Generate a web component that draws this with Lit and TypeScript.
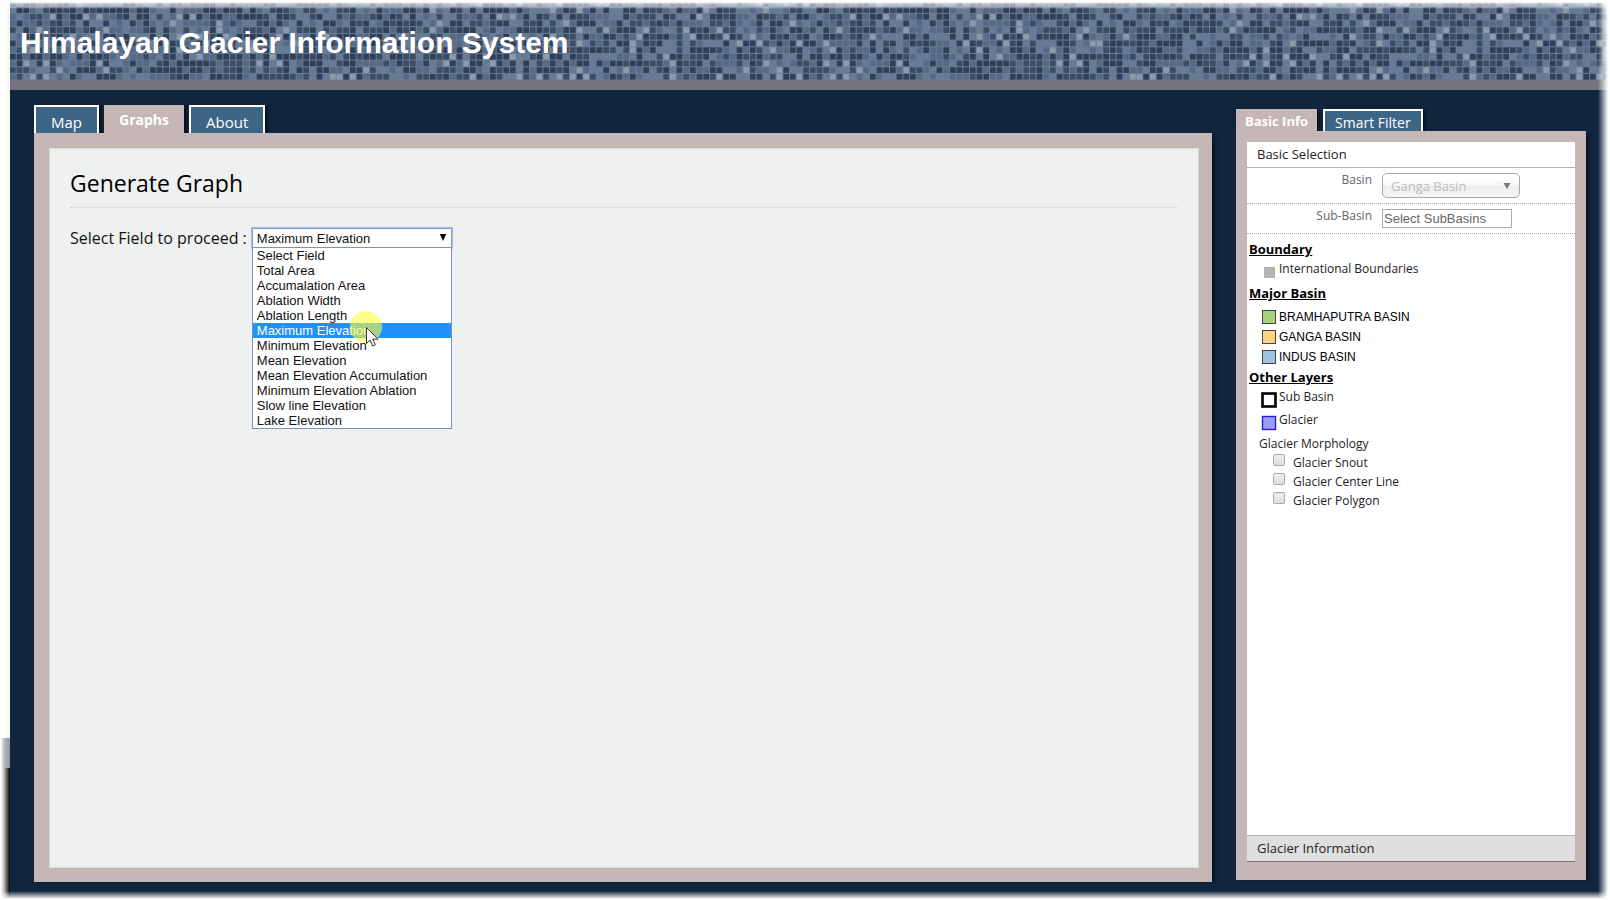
import { LitElement, html, css, svg } from "lit";
import { customElement, state } from "lit/decorators.js";

const FIELDS = [
  "Select Field",
  "Total Area",
  "Accumalation Area",
  "Ablation Width",
  "Ablation Length",
  "Maximum Elevation",
  "Minimum Elevation",
  "Mean Elevation",
  "Mean Elevation Accumulation",
  "Minimum Elevation Ablation",
  "Slow line Elevation",
  "Lake Elevation",
];

const TILE_COLS = 120;
const TILE_ROWS = 12;
const PITCH = 20 / 3;
const SHADES: [number, string][] = [
  [0.3, "#2f3f59"],
  [0.5, "#3b4c67"],
  [0.72, "#566a86"],
  [0.93, "#677b96"],
  [1, "#8c9bab"],
];

/* Deterministic mosaic so the banner looks the same on every load. */
function mosaicCells() {
  let seed = 20417;
  const next = () => {
    seed = (seed * 16807) % 2147483647;
    return seed / 2147483647;
  };
  const cells = [];
  for (let r = 0; r < TILE_ROWS; r++) {
    for (let c = 0; c < TILE_COLS; c++) {
      const v = next();
      const fill = SHADES.find(([limit]) => v <= limit)![1];
      cells.push(svg`<rect x=${c * PITCH} y=${r * PITCH + 0.6} width=${PITCH - 1} height=${PITCH - 1} fill=${fill}></rect>`);
    }
  }
  return cells;
}

@customElement("mosaic-banner")
class MosaicBanner extends LitElement {
  static styles = css`
    :host { display: block; position: relative; height: 80px; border-bottom: 10px solid #757380; overflow: hidden; }
    .tiles { position: absolute; inset: 0; width: 100%; height: 100%; }
    .title { position: relative; margin: 0; padding-left: 10px; font: bold 30px/86px "Liberation Sans", Arial, sans-serif; color: #fff; white-space: nowrap; }
  `;
  render() {
    return html`
      <svg class="tiles" aria-hidden="true">
        <defs>
          <pattern id="mosaic" width=${TILE_COLS * PITCH} height=${TILE_ROWS * PITCH} patternUnits="userSpaceOnUse">
            <rect width="800" height="80" fill="#687b93"></rect>
            ${mosaicCells()}
          </pattern>
        </defs>
        <rect width="100%" height="100%" fill="url(#mosaic)"></rect>
      </svg>
      <h1 class="title">Himalayan Glacier Information System</h1>
    `;
  }
}

@customElement("graph-form")
class GraphForm extends LitElement {
  @state() private chosen = "Maximum Elevation";
  static styles = css`
    :host { display: block; padding: 18px 20px; font-family: "Open Sans", sans-serif; color: #111; }
    .heading { margin: 0; padding-bottom: 8px; border-bottom: 1px dotted #ccc; font-size: 23px; line-height: 32px; font-weight: 400; color: #000; }
    .row { display: flex; align-items: center; gap: 5px; margin-top: 20px; font-size: 16px; line-height: 20px; }
    .picker { position: relative; width: 200px; font: 13px/15px "Liberation Sans", Arial, sans-serif; }
    .select { appearance: none; display: block; box-sizing: border-box; width: 100%; height: 20px; margin: 0; padding: 0 4px; border: 1px solid #7f9fce; border-radius: 0; outline: 1px solid #a5c0ea; outline-offset: 0; background: #fff; font: inherit; color: #111; }
    .arrow { position: absolute; right: 5px; top: 6px; width: 8px; height: 7px; pointer-events: none; }
    .options { position: absolute; z-index: 1; top: 19px; left: 0; right: 0; margin: 0; padding: 0; list-style: none; border: 1px solid #7f93b8; background: #fff; }
    .option { padding-left: 4px; color: #111; }
    .option.active { background: #1e90ff; color: #fff; }
    .pointer { position: absolute; z-index: 2; left: 98px; top: 83px; width: 32px; height: 36px; pointer-events: none; }
  `;
  render() {
    return html`
      <h2 class="heading">Generate Graph</h2>
      <div class="row">
        <label for="field">Select Field to proceed :</label>
        <div class="picker">
          <select id="field" class="select" .value=${this.chosen}
            @change=${(e: Event) => (this.chosen = (e.target as HTMLSelectElement).value)}>
            ${FIELDS.map((f) => html`<option ?selected=${f === this.chosen}>${f}</option>`)}
          </select>
          <svg class="arrow" viewBox="0 0 8 7"><path d="M0.8 0h6.4L4 7z" fill="#000"></path></svg>
          <ul class="options" role="listbox" aria-label="Field">
            ${FIELDS.map((f) => html`
              <li class="option ${f === this.chosen ? "active" : ""}" role="option" aria-selected=${f === this.chosen}
                @click=${() => (this.chosen = f)}>${f}</li>`)}
          </ul>
          <svg class="pointer" viewBox="0 0 32 36" aria-hidden="true">
            <circle cx="16" cy="16" r="16" fill="#ffff3c" fill-opacity="0.6"></circle>
            <path d="M16.5 16.5v16l3.6-3.4 2.5 5.9 2.7-1.2-2.5-5.6h5.2z" fill="#fff" stroke="#333" stroke-width="1"></path>
          </svg>
        </div>
      </div>
    `;
  }
}

@customElement("basic-info")
class BasicInfo extends LitElement {
  static styles = css`
    :host { display: flex; flex-direction: column; flex: 1; background: #fff; font-family: "Open Sans", sans-serif; font-size: 12px; color: #222; }
    .bar { margin: 0; padding-left: 10px; font-size: 13px; line-height: 25px; font-weight: 400; border-bottom: 1px solid #b3b3b3; }
    .bar.closed { margin-top: auto; background: #dfdfdf; border-top: 1px solid #b3b3b3; border-bottom-color: #777; }
    .field { display: grid; grid-template-columns: 125px 1fr; column-gap: 10px; border-bottom: 1px dotted #aaa; color: #666; padding: 5px 0; align-items: start; }
    .caption { text-align: right; line-height: 14px; }
    .basin { position: relative; width: 138px; }
    .basin-select { appearance: none; display: block; box-sizing: border-box; width: 100%; height: 25px; margin: 0; padding: 0 8px; border: 1px solid #aaa; border-radius: 5px; background: linear-gradient(#fff 20%, #f6f6f6 50%, #eee 52%, #f4f4f4); font: inherit; font-size: 13px; color: #bbb; opacity: 1; }
    .arrow { position: absolute; right: 9px; top: 10px; width: 8px; height: 6px; pointer-events: none; }
    .sub { display: block; box-sizing: border-box; width: 130px; height: 19px; margin: 0; padding: 0 1px; border: 1px solid #aaa; font: 13px "Liberation Sans", Arial, sans-serif; color: #666; }
    .sub::placeholder { color: #666; }
    .legend { padding: 6px 2px; }
    .group { margin: 0; font-size: 13px; line-height: 18px; font-weight: 700; text-decoration: underline; color: #000; }
    .item { display: grid; grid-template-columns: 16px 1fr; column-gap: 2px; padding-left: 12px; height: 23px; line-height: 22px; }
    .item svg { width: 16px; height: 16px; margin-top: 6px; overflow: visible; }
    .boundary { height: 26px; }
    .basins { padding: 5px 0 1px; }
    .basins .item { height: 20px; line-height: 20px; font-family: "Liberation Sans", Arial, sans-serif; color: #000; }
    .basins svg { margin-top: 2px; }
    .sublist { margin: 0; padding: 3px 0 0 10px; line-height: 18px; }
    .check { display: flex; gap: 8px; align-items: flex-start; height: 19px; padding-left: 24px; line-height: 19px; }
    .box { appearance: none; box-sizing: border-box; width: 12px; height: 12px; margin: 1px 0 0; border: 1px solid #aaa; border-radius: 2px; background: linear-gradient(#eee, #ddd); }
    .box:checked { background: #3d6585; }
  `;
  private swatch(fill: string, stroke: string, width = 1) {
    return html`<svg viewBox="0 0 16 16" aria-hidden="true"><rect x="1.5" y="1.5" width="13" height="13" fill=${fill} stroke=${stroke} stroke-width=${width}></rect></svg>`;
  }
  render() {
    return html`
      <h3 class="bar">Basic Selection</h3>
      <div class="field">
        <label class="caption" for="basin">Basin</label>
        <div class="basin">
          <select id="basin" class="basin-select" disabled><option>Ganga Basin</option></select>
          <svg class="arrow" viewBox="0 0 8 6"><path d="M0.5 0h7L4 6z" fill="#777"></path></svg>
        </div>
      </div>
      <div class="field">
        <label class="caption" for="sub">Sub-Basin</label>
        <input id="sub" class="sub" type="text" placeholder="Select SubBasins" />
      </div>
      <div class="legend">
        <h4 class="group">Boundary</h4>
        <div class="item boundary">
          <svg viewBox="0 0 16 16" aria-hidden="true"><rect x="3" y="3" width="11" height="11" fill="#b3b3b3"></rect></svg>
          <span>International Boundaries</span>
        </div>
        <h4 class="group">Major Basin</h4>
        <div class="basins">
          <div class="item">${this.swatch("#a8d37e", "#444")}<span>BRAMHAPUTRA BASIN</span></div>
          <div class="item">${this.swatch("#fed37f", "#444")}<span>GANGA BASIN</span></div>
          <div class="item">${this.swatch("#9dc4e0", "#444")}<span>INDUS BASIN</span></div>
        </div>
        <h4 class="group">Other Layers</h4>
        <div class="item">${this.swatch("#fff", "#000", 2.6)}<span>Sub Basin</span></div>
        <div class="item">${this.swatch("#9c9cfc", "#2020d0", 1.4)}<span>Glacier</span></div>
        <p class="sublist">Glacier Morphology</p>
        ${["Glacier Snout", "Glacier Center Line", "Glacier Polygon"].map(
          (t) => html`<label class="check"><input class="box" type="checkbox" /><span>${t}</span></label>`
        )}
      </div>
      <h3 class="bar closed">Glacier Information</h3>
    `;
  }
}

@customElement("app-root")
class AppRoot extends LitElement {
  static styles = css`
    :host { display: grid; grid-template-columns: 10px 1fr; min-height: 100vh; position: relative; background: #fff; font-family: "Open Sans", sans-serif; }
    :host::after { content: ""; position: absolute; inset: 0; pointer-events: none;
      background:
        linear-gradient(#fff 2px, rgba(255, 255, 255, 0.6) 4px, rgba(255, 255, 255, 0.4) 7px, transparent 9px),
        linear-gradient(to left, #fff 2px, transparent 12px),
        linear-gradient(to top, #fff 1px, transparent 9px); }
    .edge { display: flex; flex-direction: column; background: linear-gradient(to right, #fff 5px, #f4f4f4); }
    .edge-mid { margin-top: auto; height: 30px; background: linear-gradient(to right, #fff 1px, #b8bcc4 4px, #8f96a3); }
    .edge-low { height: 132px; background: linear-gradient(to right, #fff 1px, #bbb 4px, #000); }
    .window { display: flex; flex-direction: column; background: #11253f; }
    .main { flex: 1; display: grid; grid-template-columns: 1fr 350px; gap: 24px; padding: 15px 24px 18px; }
    .column { display: flex; flex-direction: column; }
    .side { padding: 4px 0 2px; }
    .tabs { display: flex; gap: 5px; height: 28px; }
    .tab { box-sizing: border-box; margin: 0; padding: 4px 15px 0; border: 2px solid #fff; border-bottom: 0; background: #3d6586; box-shadow: 2px 1px 3px #060d17; font: 15px/22px "Open Sans", sans-serif; color: #fff; }
    .tab.on { padding: 2px 15px 0; border: 0; background: #c4b7b6; font-size: 14px; font-weight: 700; line-height: 26px; }
    .side .tabs { gap: 6px; height: 22px; }
    .side .tab { padding: 2px 10px 0; font-size: 14px; line-height: 20px; overflow: hidden; }
    .side .tab.on { padding: 2px 9px 0; font-size: 13px; }
    .panel { flex: 1; display: flex; flex-direction: column; padding: 15px 13px 14px 15px; background: #c4b7b6; box-shadow: 5px 2px 3px -2px #0a1526; }
    .sheet { flex: 1; background: #eff1f1; border: 1px solid #d9dbdb; box-sizing: border-box; }
    .side .panel { padding: 11px 11px 18px; }
  `;
  render() {
    return html`
      <div class="edge" aria-hidden="true"><div class="edge-mid"></div><div class="edge-low"></div></div>
      <div class="window">
        <mosaic-banner></mosaic-banner>
        <main class="main">
          <section class="column">
            <nav class="tabs">
              <button class="tab">Map</button>
              <button class="tab on">Graphs</button>
              <button class="tab">About</button>
            </nav>
            <div class="panel"><graph-form class="sheet"></graph-form></div>
          </section>
          <aside class="column side">
            <nav class="tabs">
              <button class="tab on">Basic Info</button>
              <button class="tab">Smart Filter</button>
            </nav>
            <div class="panel"><basic-info></basic-info></div>
          </aside>
        </main>
      </div>
    `;
  }
}
